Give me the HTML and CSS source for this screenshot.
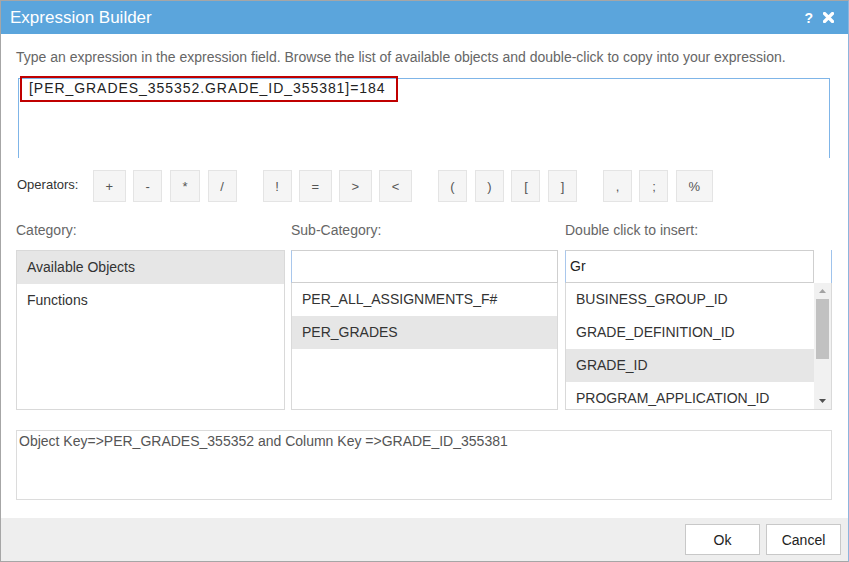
FILE: index.html
```html
<!DOCTYPE html>
<html>
<head>
<meta charset="utf-8">
<link rel="stylesheet" href="styles.css">
</head>
<body>
<div class="dialog">
  <div class="titlebar">
    <span class="title">Expression Builder</span>
    <span class="tools">
      <span class="help">?</span>
      <svg class="close" width="11" height="11" viewBox="0 0 11 11"><path d="M1.5 1.5 L9.5 9.5 M9.5 1.5 L1.5 9.5" stroke="#fff" stroke-width="3.2" stroke-linecap="round"/></svg>
    </span>
  </div>
  <div class="content">
    <p class="hint">Type an expression in the expression field. Browse the list of available objects and double-click to copy into your expression.</p>
    <div class="expr-wrap">
      <div class="expr"><span class="expr-text">[PER_GRADES_355352.GRADE_ID_355381]=184</span></div>
      <div class="mark"></div>
    </div>
    <div class="ops">
      <span class="ops-label">Operators:</span>
      <div class="group">
        <button class="op">+</button><button class="op">-</button><button class="op">*</button><button class="op">/</button>
      </div>
      <div class="group">
        <button class="op">!</button><button class="op">=</button><button class="op">&gt;</button><button class="op">&lt;</button>
      </div>
      <div class="group">
        <button class="op">(</button><button class="op">)</button><button class="op">[</button><button class="op">]</button>
      </div>
      <div class="group">
        <button class="op">,</button><button class="op">;</button><button class="op">%</button>
      </div>
    </div>
    <div class="columns">
      <div class="col">
        <div class="col-label">Category:</div>
        <div class="list">
          <div class="item sel">Available Objects</div>
          <div class="item">Functions</div>
        </div>
      </div>
      <div class="col">
        <div class="col-label">Sub-Category:</div>
        <div class="list">
          <div class="filter"></div>
          <div class="item">PER_ALL_ASSIGNMENTS_F#</div>
          <div class="item sel">PER_GRADES</div>
        </div>
      </div>
      <div class="col col3">
        <div class="col-label">Double click to insert:</div>
        <div class="list3">
          <div class="head3">
            <div class="filter f3">Gr</div>
          </div>
          <div class="body3">
            <div class="items3">
              <div class="item">BUSINESS_GROUP_ID</div>
              <div class="item">GRADE_DEFINITION_ID</div>
              <div class="item sel">GRADE_ID</div>
              <div class="item">PROGRAM_APPLICATION_ID</div>
            </div>
            <div class="scrollbar">
              <svg width="17" height="14" viewBox="0 0 17 14"><path d="M5 9 L8.5 5 L12 9 Z" fill="#a3a3a3"/></svg>
              <div class="thumb"></div>
              <svg class="down" width="17" height="14" viewBox="0 0 17 14"><path d="M5 5 L8.5 9 L12 5 Z" fill="#505050"/></svg>
            </div>
          </div>
        </div>
      </div>
    </div>
    <div class="status">Object Key=&gt;PER_GRADES_355352 and Column Key =&gt;GRADE_ID_355381</div>
  </div>
  <div class="footer">
    <button class="btn">Ok</button>
    <button class="btn">Cancel</button>
  </div>
</div>
</body>
</html>
```

FILE: styles.css
```css
* { box-sizing: border-box; }
html, body { margin: 0; padding: 0; background: #fff; }
body { font-family: "Liberation Sans", Arial, sans-serif; }

.dialog {
  width: 849px;
  height: 562px;
  border: 1px solid #a6a6a6;
  border-right-color: #8db5dd;
  display: flex;
  flex-direction: column;
  overflow: hidden;
}

.titlebar {
  height: 33px;
  flex: none;
  background: #5ba5dc;
  color: #fff;
  display: flex;
  align-items: center;
  justify-content: space-between;
  padding: 0 14px 0 9px;
}
.title { font-size: 17px; }
.tools { display: flex; align-items: center; gap: 10px; }
.help { font-weight: bold; font-size: 14px; }
.close { display: block; }

.content {
  flex: 1;
  padding: 0 16px 0 15px;
  display: flex;
  flex-direction: column;
}
.hint {
  margin: 15px 0 0;
  font-size: 14px;
  line-height: 16px;
  color: #666;
}

.expr-wrap { position: relative; margin: 13px 2px 0; }
.expr {
  height: 80px;
  border: 1px solid #7fb5e8;
  border-bottom: none;
  padding: 0 10px;
}
.expr-text {
  font-size: 14px;
  letter-spacing: 0.95px;
  color: #222;
  line-height: 16px;
}
.mark {
  position: absolute;
  left: 2px;
  top: -2px;
  width: 378px;
  height: 26px;
  border: 2px solid #c00000;
}

.ops {
  display: flex;
  align-items: center;
  margin-top: 12px;
  height: 32px;
}
.ops-label { font-size: 13px; color: #333; width: 77px; padding-left: 1px; padding-bottom: 3px; }
.group { display: flex; gap: 7.5px; margin-right: 26px; }
.op {
  height: 32px;
  min-width: 29px;
  padding: 0 11.5px;
  background: #f5f5f5;
  border: 1px solid #e4e4e4;
  font-family: "Liberation Sans", Arial, sans-serif;
  font-size: 13px;
  color: #555;
  margin: 0;
}

.columns {
  display: grid;
  grid-template-columns: 269px 267px 1fr;
  column-gap: 6px;
  margin-top: 20px;
}
.col3 { margin-left: 1px; }
.col-label {
  font-size: 14px;
  line-height: 16px;
  color: #666;
  margin-bottom: 12px;
}
.list {
  height: 160px;
  border: 1px solid #d9d9d9;
}
.item {
  height: 33px;
  line-height: 33px;
  padding-left: 10px;
  font-size: 14px;
  color: #333;
  white-space: nowrap;
}
.item.sel { background: #e6e6e6; }
.filter {
  height: 33px;
  border: 1px solid #cfcfcf;
  border-left-color: #a9c7ec;
  margin: -1px -1px 0 -1px;
  font-size: 14px;
  line-height: 31px;
  color: #222;
  padding-left: 4px;
}

.list3 { height: 160px; display: flex; flex-direction: column; }
.head3 {
  height: 33px;
  flex: none;
  border-right: 1px solid #9fc3ec;
  padding-right: 17px;
}
.f3 { margin: 0; }
.body3 {
  flex: 1;
  display: flex;
  border: 1px solid #d9d9d9;
  border-top: none;
  overflow: hidden;
}
.items3 { flex: 1; overflow: hidden; }
.scrollbar {
  width: 17px;
  flex: none;
  background: #f1f1f1;
  display: flex;
  flex-direction: column;
  align-items: center;
}
.scrollbar svg { display: block; flex: none; margin-top: 1px; }
.thumb {
  width: 13px;
  height: 60px;
  background: #c1c1c1;
  margin-top: 1px;
}
.scrollbar .down { margin-top: auto; margin-bottom: 1px; }

.status {
  margin-top: 20px;
  height: 70px;
  border: 1px solid #dcdcdc;
  padding: 2px 2px;
  font-size: 14px;
  line-height: 16px;
  color: #555;
}

.footer {
  height: 43px;
  flex: none;
  margin-top: 18px;
  background: #eeeeee;
  display: flex;
  justify-content: flex-end;
  align-items: flex-start;
  gap: 6px;
  padding: 6px 7px 0 0;
}
.btn {
  width: 75px;
  height: 31px;
  background: #fff;
  border: 1px solid #c8c8c8;
  font-family: "Liberation Sans", Arial, sans-serif;
  font-size: 14px;
  color: #222;
  margin: 0;
}
```
